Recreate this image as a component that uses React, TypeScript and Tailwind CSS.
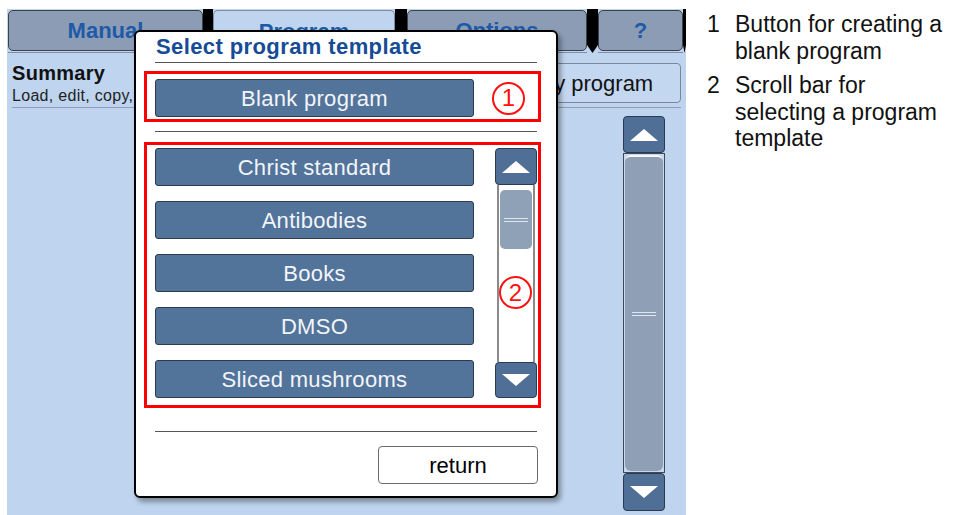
import React from 'react';

const TEMPLATES = ['Christ standard', 'Antibodies', 'Books', 'DMSO', 'Sliced mushrooms'];

function Triangle({ down }: { down?: boolean }) {
  return (
    <svg width="30" height="14" viewBox="0 0 30 14">
      <polygon points={down ? '1,1 29,1 15,13' : '15,1 29,13 1,13'} fill="#fff" />
    </svg>
  );
}

function Grip() {
  return (
    <div className="flex w-[24px] flex-col gap-[2px]">
      <div className="h-px bg-[#dfe6ef]" />
      <div className="h-px bg-[#dfe6ef]" />
    </div>
  );
}

function ArrowButton({ down, h }: { down?: boolean; h: string }) {
  return (
    <div
      className={`${h} flex shrink-0 items-center justify-center rounded-[4px] border border-[#2b3a4c] bg-[#4f6f96]`}
    >
      <Triangle down={down} />
    </div>
  );
}

function BlueButton({ label }: { label: string }) {
  return (
    <div className="flex h-[38px] w-[319px] shrink-0 items-center justify-center rounded-[3px] border border-[#2c3b4d] bg-[#52739a] text-[22px] tracking-[0.3px] text-[#f2f5f9]">
      {label}
    </div>
  );
}

function Callout({ n }: { n: number }) {
  return (
    <div className="flex h-[33px] w-[33px] items-center justify-center rounded-full border-2 border-[#ff1010] bg-white text-[24px] leading-none text-[#ff1010]">
      {n}
    </div>
  );
}

function Tab({ label, w }: { label: string; w: string }) {
  return (
    <div className={`${w} h-[44px] shrink-0 border-b border-[#7f8ea2]`}>
      <div className="mt-[1px] flex h-[41px] items-center justify-center rounded-[5px] border border-[#39424d] bg-[#8b9cb4] text-[22px] font-bold text-[#1e5aa8]">
        {label}
      </div>
    </div>
  );
}

function Gap({ w }: { w: string }) {
  return (
    <div
      className={`${w} h-[44px] shrink-0 bg-black [clip-path:polygon(0_0,100%_0,100%_82%,50%_100%,0_82%)]`}
    />
  );
}

function Dialog() {
  return (
    <div className="absolute left-[127px] top-[21px] z-10 flex h-[468px] w-[424px] flex-col rounded-[6px] border-2 border-black bg-white shadow-[3px_4px_5px_rgba(0,0,0,0.35)]">
      <div className="mt-[4px] h-[22px] pl-[20px] text-[22px] font-bold leading-[22px] tracking-[0.4px] text-[#164b96]">
        Select program template
      </div>
      <div className="mx-[19px] mt-[4px] h-px bg-[#555]" />

      {/* 1: blank program */}
      <div className="ml-[8px] mt-[8px] flex w-[397px] items-center border-[3px] border-[#ff0000] pb-[2px] pl-[8px] pt-[5px]">
        <BlueButton label="Blank program" />
        <div className="ml-[18px]">
          <Callout n={1} />
        </div>
      </div>

      <div className="mx-[19px] mt-[9px] h-px bg-[#555]" />

      {/* 2: template list + scroll bar */}
      <div className="relative ml-[8px] mt-[10px] flex h-[266px] w-[397px] border-[3px] border-[#ff0000] pl-[8px] pt-[3px]">
        <div className="flex flex-col gap-[15px]">
          {TEMPLATES.map((t) => (
            <BlueButton key={t} label={t} />
          ))}
        </div>
        <div className="ml-[21px] flex h-[250px] w-[42px] flex-col">
          <ArrowButton h="h-[37px]" />
          <div className="mx-[2px] flex-1 border-x-2 border-[#8a8a8a] bg-white px-[1px] pt-[5px]">
            <div className="flex h-[59px] items-center justify-center rounded-[5px] bg-[#8fa1b7]">
              <Grip />
            </div>
          </div>
          <ArrowButton down h="h-[36px]" />
        </div>
        <div className="absolute left-[352px] top-[131px]">
          <Callout n={2} />
        </div>
      </div>

      <div className="mx-[19px] mt-[23px] h-px bg-[#555]" />

      <div className="mr-[18px] mt-[14px] flex h-[38px] w-[160px] items-center justify-center self-end rounded-[4px] border border-[#6b6b6b] bg-white text-[22px] text-black">
        return
      </div>
    </div>
  );
}

function Device() {
  return (
    <div className="relative ml-[7px] mt-[9px] flex h-[506px] w-[679px] shrink-0 flex-col bg-[#bfd4ee]">
      <div className="flex h-[44px] pl-[1px]">
        <Tab label="Manual" w="w-[195px]" />
        <Gap w="w-[10px]" />
        <div className="mt-[1px] h-[43px] w-[182px] shrink-0 rounded-t-[5px] border-x border-t border-[#7f8ea2] bg-[#bfd4ee]">
          <div className="flex h-[40px] items-center justify-center text-[22px] font-bold text-[#1e5aa8]">
            Program
          </div>
        </div>
        <Gap w="w-[12px]" />
        <Tab label="Options" w="w-[180px]" />
        <Gap w="w-[11px]" />
        <Tab label="?" w="w-[85px]" />
        <Gap w="w-[3px]" />
      </div>

      <div className="flex flex-1 flex-col">
        <div className="flex h-[54px] items-start justify-between px-[5px]">
          <div className="pt-[8px]">
            <div className="text-[20px] font-bold leading-[24px] tracking-[0.3px] text-[#111]">Summary</div>
            <div className="mt-[2px] text-[16px] leading-[18px] tracking-[0.3px] text-[#222]">
              Load, edit, copy, delete programs
            </div>
          </div>
          <div className="mt-[10px] flex h-[40px] w-[195px] items-center justify-center rounded-[4px] border border-[#7b8898] bg-[#c4d7f0] text-[22px] text-[#111]">
            Copy program
          </div>
        </div>
        <div className="mx-[5px] h-px bg-[#8d9db3]" />

        <div className="flex flex-1 justify-end">
          <div className="mb-[4px] mr-[21px] mt-[8px] flex w-[42px] flex-col">
            <ArrowButton h="h-[37px]" />
            <div className="flex flex-1 border border-[#3e4a58] bg-[#c9d8ec] p-[1px]">
              <div className="flex flex-1 items-center justify-center rounded-[6px] border-t-2 border-[#f4f7fb] bg-[#8fa0b6]">
                <Grip />
              </div>
            </div>
            <ArrowButton down h="h-[38px]" />
          </div>
        </div>
      </div>

      <Dialog />
    </div>
  );
}

export default function App() {
  return (
    <div className="flex h-[515px] w-[953px] overflow-hidden bg-white font-['Liberation_Sans',Arial,sans-serif]">
      <Device />
      <div className="ml-[21px] pt-[11px] text-[23px] leading-[26.5px] text-[#111]">
        <div className="flex">
          <div className="w-[28px]">1</div>
          <div>
            Button for creating a
            <br />
            blank program
          </div>
        </div>
        <div className="mt-[8px] flex">
          <div className="w-[28px]">2</div>
          <div>
            Scroll bar for
            <br />
            selecting a program
            <br />
            template
          </div>
        </div>
      </div>
    </div>
  );
}
